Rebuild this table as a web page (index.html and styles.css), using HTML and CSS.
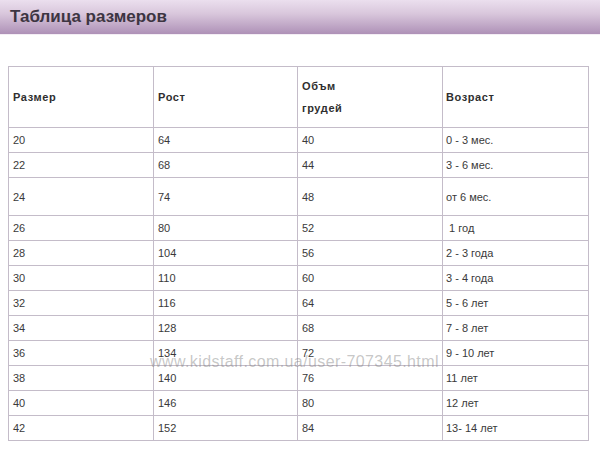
FILE: index.html
```html
<!DOCTYPE html>
<html lang="ru">
<head>
<meta charset="utf-8">
<link rel="stylesheet" href="styles.css">
</head>
<body>
<div class="page">
  <div class="titlebar"><h1 class="title">Таблица размеров</h1></div>
  <div class="content">
    <table class="sizes">
      <colgroup>
        <col class="c1"><col class="c2"><col class="c3"><col class="c4">
      </colgroup>
      <thead>
        <tr class="head">
          <th>Размер</th><th>Рост</th><th>Объм<br>грудей</th><th class="last">Возраст</th>
        </tr>
      </thead>
      <tbody>
        <tr><td>20</td><td>64</td><td>40</td><td class="last">0 - 3 мес.</td></tr>
        <tr><td>22</td><td>68</td><td>44</td><td class="last">3 - 6 мес.</td></tr>
        <tr class="tall"><td>24</td><td>74</td><td>48</td><td class="last">от 6 мес.</td></tr>
        <tr><td>26</td><td>80</td><td>52</td><td class="last">&nbsp;1 год</td></tr>
        <tr><td>28</td><td>104</td><td>56</td><td class="last">2 - 3 года</td></tr>
        <tr><td>30</td><td>110</td><td>60</td><td class="last">3 - 4 года</td></tr>
        <tr><td>32</td><td>116</td><td>64</td><td class="last">5 - 6 лет</td></tr>
        <tr><td>34</td><td>128</td><td>68</td><td class="last">7 - 8 лет</td></tr>
        <tr><td>36</td><td>134</td><td>72</td><td class="last">9 - 10 лет</td></tr>
        <tr><td>38</td><td>140</td><td>76</td><td class="last">11 лет</td></tr>
        <tr><td>40</td><td>146</td><td>80</td><td class="last">12 лет</td></tr>
        <tr><td>42</td><td>152</td><td>84</td><td class="last">13- 14 лет</td></tr>
      </tbody>
    </table>
    <div class="watermark">www.kidstaff.com.ua/user-707345.html</div>
  </div>
</div>
</body>
</html>
```
FILE: styles.css
```css
html, body {
  margin: 0;
  padding: 0;
  background: #ffffff;
}
.page {
  width: 600px;
  height: 456px;
  overflow: hidden;
  font-family: "Liberation Sans", Arial, sans-serif;
}
.titlebar {
  height: 34px;
  background: linear-gradient(to bottom, #ebdfee 0%, #d9c7dc 40%, #ae91b7 100%);
  border-bottom: 1px solid #f4eef5;
  box-sizing: content-box;
}
.title {
  margin: 0;
  padding: 6px 0 0 10px;
  font-size: 17px;
  line-height: 22px;
  font-weight: bold;
  color: #3d3542;
}
.content {
  position: relative;
  padding: 31px 0 0 8px;
}
.sizes {
  border-collapse: collapse;
  table-layout: fixed;
  width: 580px;
  font-size: 11px;
  color: #3a3a3a;
}
.c1 { width: 145px; }
.c2 { width: 144px; }
.c3 { width: 145px; }
.c4 { width: 146px; }
.sizes th, .sizes td {
  border: 1px solid #c4bcc9;
  text-align: left;
  padding: 0 4px;
  vertical-align: middle;
}
.sizes th {
  height: 60px;
  font-weight: bold;
  font-size: 11px;
  letter-spacing: 0.6px;
  line-height: 22px;
  color: #2f2f2f;
}
.sizes td {
  height: 24px;
  line-height: 14px;
}
.sizes .last {
  padding-left: 3px;
}
.sizes tr.tall td {
  height: 37px;
}
.watermark {
  position: absolute;
  left: 150px;
  top: 318px;
  font-size: 16px;
  letter-spacing: 0.4px;
  color: rgba(130, 130, 130, 0.45);
  white-space: nowrap;
}
```
